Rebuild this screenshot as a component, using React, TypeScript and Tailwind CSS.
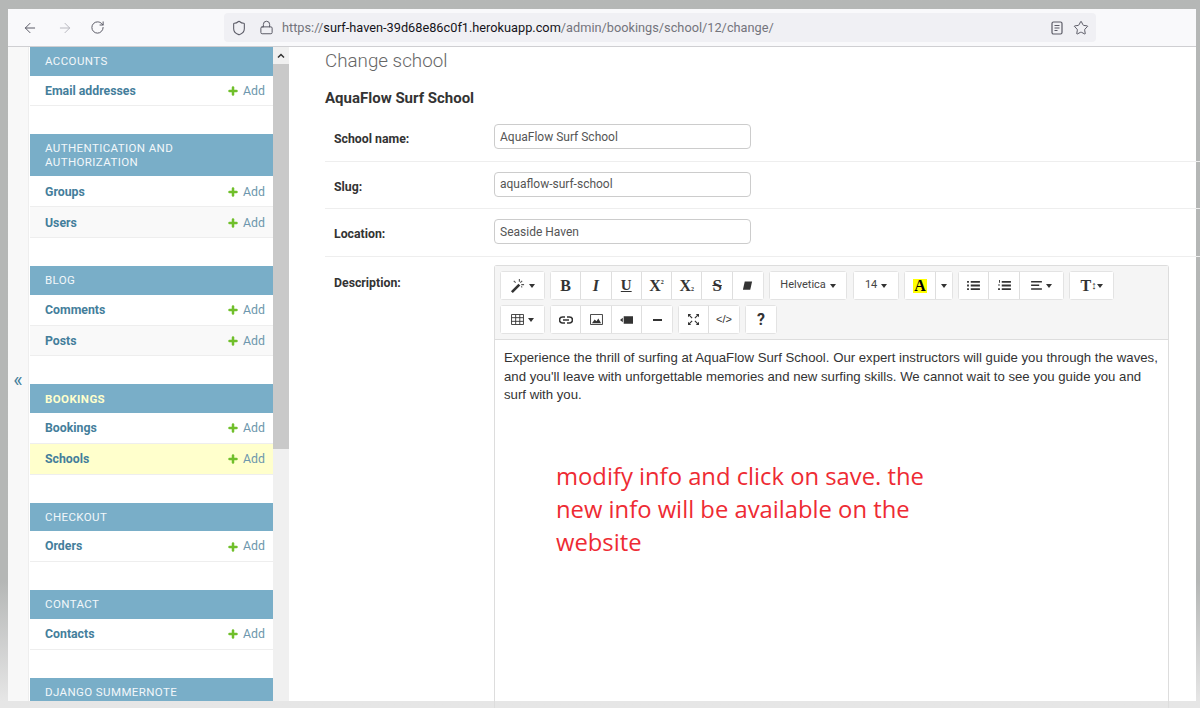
import { Lock, RotateCw, ArrowLeft, ArrowRight, Shield, Star, Plus } from "lucide-react";
import type { ReactNode } from "react";

const SECTIONS = [
  { title: "ACCOUNTS", rows: ["Email addresses"], first: true },
  { title: "AUTHENTICATION AND AUTHORIZATION", rows: ["Groups", "Users"] },
  { title: "BLOG", rows: ["Comments", "Posts"] },
  { title: "BOOKINGS", rows: ["Bookings", "Schools"], active: true },
  { title: "CHECKOUT", rows: ["Orders"] },
  { title: "CONTACT", rows: ["Contacts"] },
  { title: "DJANGO SUMMERNOTE", rows: [] },
];

function Caret() {
  return <span className="inline-block h-0 w-0 border-x-[3px] border-t-[4px] border-x-transparent border-t-[#333]" />;
}

function Btn({ children, className = "" }: { children: ReactNode; className?: string }) {
  return (
    <div className={`flex h-[27px] items-center justify-center gap-1 border-r border-[#dedede] bg-white text-[#333] last:border-r-0 ${className}`}>
      {children}
    </div>
  );
}

function Group({ children, className = "" }: { children: ReactNode; className?: string }) {
  return <div className={`flex rounded-[3px] border border-[#e3e3e3] bg-white ${className}`}>{children}</div>;
}

function Field({ label, value }: { label: string; value: string }) {
  return (
    <div className="flex h-[47.5px] border-b border-[#eeeeee] pl-[9px] pt-[10px]">
      <div className="w-[160px] pt-[6px] text-[12.3px] font-bold text-[#333]">{label}</div>
      <div className="flex h-[25px] w-[257px] items-center rounded-[4px] border border-[#cccccc] px-[5px] text-[12px] text-[#555]">
        {value}
      </div>
    </div>
  );
}

function Sidebar() {
  return (
    <div className="relative h-full w-[243px] overflow-hidden">
      {SECTIONS.map((s) => (
        <div key={s.title} className="mb-[28px]">
          <div
            className={`flex items-center bg-[#79aec8] pl-[15px] pr-[20px] text-[11.5px] leading-[14px] tracking-[0.4px] ${
              s.title.length > 20 && s.rows.length ? "h-[42px]" : "h-[28.5px]"
            } ${s.active ? "font-bold text-[#ffffcc]" : "text-[#f2f7fa]"}`}
          >
            {s.title}
          </div>
          {s.rows.map((r) => (
            <div
              key={r}
              className={`flex h-[30.9px] items-center justify-between border-b border-[#eeeeee] pl-[15px] pr-[8px] pt-[1px] text-[12.3px] ${
                r === "Schools" ? "bg-[#ffffcc]" : r === "Users" || r === "Posts" ? "bg-[#f9f9f9]" : "bg-white"
              }`}
            >
              <span className="font-bold text-[#447e9b]">{r}</span>
              <span className="flex items-center gap-[4px] text-[#6d97ad]">
                <Plus size={12} strokeWidth={5} className="text-[#70bf2b]" />
                Add
              </span>
            </div>
          ))}
        </div>
      ))}
    </div>
  );
}

function Toolbar() {
  return (
    <div className="border-b border-[#dddddd] bg-[#f5f5f5] p-[5px]">
      <div className="flex h-[29px] gap-[5px]">
        <Group>
          <Btn className="w-[43px]">
            <svg viewBox="0 0 16 16" className="h-[15px] w-[15px]">
              <path d="M1 14 9 6l2 2-8 8z" fill="#333" />
              <path d="M10 1v3M13 3l-2 2M15 7h-3M4 3l2 2M13 10l-1-1" stroke="#555" strokeWidth="1.2" />
            </svg>
            <Caret />
          </Btn>
        </Group>
        <Group>
          <Btn className="w-[30.3px] font-['Liberation_Serif',serif] text-[16px] font-bold">B</Btn>
          <Btn className="w-[30.3px] font-['Liberation_Serif',serif] text-[16px] font-bold italic">I</Btn>
          <Btn className="w-[30.3px] font-['Liberation_Serif',serif] text-[15px] font-bold underline">U</Btn>
          <Btn className="w-[30.3px] !gap-0 font-['Liberation_Serif',serif] text-[16px] font-bold">
            X<span className="mb-[6px] text-[6px]">2</span>
          </Btn>
          <Btn className="w-[30.3px] !gap-0 font-['Liberation_Serif',serif] text-[16px] font-bold">
            X<span className="mt-[7px] text-[6px]">2</span>
          </Btn>
          <Btn className="w-[30.3px] font-['Liberation_Serif',serif] text-[17px] font-bold line-through">S</Btn>
          <Btn className="w-[30.3px]">
            <svg viewBox="0 0 12 12" className="h-[11px] w-[11px]">
              <path d="M3 1.500h8L9 10.500H1z" fill="#333" />
            </svg>
          </Btn>
        </Group>
        <Group>
          <Btn className="w-[76px] text-[11px] text-[#444]">
            Helvetica <Caret />
          </Btn>
        </Group>
        <Group className="ml-[1px]">
          <Btn className="w-[44px] text-[11px] text-[#444]">
            14 <Caret />
          </Btn>
        </Group>
        <Group>
          <Btn className="w-[31px]">
            <span className="bg-[#ffff00] px-[1px] font-['Liberation_Serif',serif] text-[16px] font-bold leading-[14px] text-black">A</span>
          </Btn>
          <Btn className="w-[16px]">
            <Caret />
          </Btn>
        </Group>
        <Group>
          <Btn className="w-[30px]">
            <svg viewBox="0 0 14 12" className="h-[11px] w-[13px]" fill="#333">
              <path d="M0 1h2v2H0zM4 1h10v2H4zM0 5h2v2H0zM4 5h10v2H4zM0 9h2v2H0zM4 9h10v2H4z" />
            </svg>
          </Btn>
          <Btn className="w-[31px]">
            <svg viewBox="0 0 14 12" className="h-[11px] w-[13px]" fill="#333">
              <path d="M1 0h1v3H1zM4 1h10v2H4zM0 5h2v1H0zM4 5h10v2H4zM0 9h2v2H0zM4 9h10v2H4z" />
            </svg>
          </Btn>
          <Btn className="w-[43px]">
            <svg viewBox="0 0 12 10" className="h-[9px] w-[11px]" fill="#333">
              <path d="M0 0h12v1.600H0zM0 4h9v1.600H0zM0 8h12v1.600H0z" />
            </svg>
            <Caret />
          </Btn>
        </Group>
        <Group>
          <Btn className="w-[43px] !gap-0 font-['Liberation_Serif',serif] text-[16px] font-bold">
            T<span className="text-[11px] font-normal">↕</span>
            <Caret />
          </Btn>
        </Group>
      </div>
      <div className="mt-[5px] flex h-[29px] gap-[5px]">
        <Group>
          <Btn className="w-[43px]">
            <svg viewBox="0 0 14 12" className="h-[11px] w-[13px]" fill="none" stroke="#333">
              <path d="M.5.5h13v11H.5zM.5 4h13M.5 8h13M5 .5v11M9.500.5v11" />
            </svg>
            <Caret />
          </Btn>
        </Group>
        <Group>
          <Btn className="w-[30px]">
            <svg viewBox="0 0 14 8" className="h-[8px] w-[14px]" fill="none" stroke="#333" strokeWidth="1.6">
              <path d="M6 1H3.500a3 3 0 0 0 0 6H6M8 1h2.500a3 3 0 0 1 0 6H8M4 4h6" />
            </svg>
          </Btn>
          <Btn className="w-[31px]">
            <svg viewBox="0 0 14 12" className="h-[11px] w-[13px]">
              <path d="M.5.5h13v11H.5z" fill="none" stroke="#333" />
              <path d="M2 10l3-4 2 2 2-3 3 5z" fill="#333" />
            </svg>
          </Btn>
          <Btn className="w-[30px]">
            <svg viewBox="0 0 14 8" className="h-[8px] w-[13px]" fill="#333">
              <path d="M4 0h10v8H4zM0 4l3-2.500v5z" />
            </svg>
          </Btn>
          <Btn className="w-[30px]">
            <span className="h-[2px] w-[9px] bg-[#333]" />
          </Btn>
        </Group>
        <Group>
          <Btn className="w-[30px]">
            <svg viewBox="0 0 12 12" className="h-[11px] w-[11px]" fill="none" stroke="#333" strokeWidth="1.3">
              <path d="M1 1l3.500 3.500M11 1 7.500 4.500M1 11l3.500-3.500M11 11 7.500 7.500" />
              <path d="M0 0h3.500L0 3.500zM12 0v3.500L8.500 0zM0 12V8.500L3.500 12zM12 12H8.500L12 8.500z" fill="#333" stroke="none" />
            </svg>
          </Btn>
          <Btn className="w-[30px] font-['Liberation_Sans',sans-serif] text-[11px]">&lt;/&gt;</Btn>
        </Group>
        <Group>
          <Btn className="w-[30px] text-[16px] font-bold">?</Btn>
        </Group>
      </div>
    </div>
  );
}

export default function App() {
  return (
    <div className="flex h-[708px] w-[1200px] flex-col overflow-hidden bg-linear-to-b from-[#b5b7b6] from-[82%] to-[#e6e6e6] to-[99%] pb-[7px] pl-[8px] pr-[4px] pt-[9px] font-['Roboto','Liberation_Sans',sans-serif]">
      {/* browser chrome */}
      <div className="flex h-[38px] shrink-0 items-center border-b border-[#cfcfd2] bg-[#f9f9fb] pl-[14px] text-[#5b5b66]">
        <ArrowLeft size={16} strokeWidth={1.5} />
        <ArrowRight size={16} strokeWidth={1.5} className="ml-[19px] text-[#b9b9c0]" />
        <RotateCw size={15} strokeWidth={1.6} className="ml-[17px]" />
        <div className="ml-[119px] flex h-[29px] w-[872px] items-center rounded-[4px] bg-[#f0f0f4] pl-[7px]">
          <Shield size={16} strokeWidth={1.6} />
          <Lock size={15} strokeWidth={1.6} className="ml-[12px]" />
          <div className="ml-[8px] flex-1 text-[12.75px] text-[#74747c]">
            https://<span className="text-[#15141a]">surf-haven-39d68e86c0f1.herokuapp.com</span>/admin/bookings/school/12/change/
          </div>
          <svg viewBox="0 0 14 14" className="mr-[9px] h-[14px] w-[14px]" fill="none" stroke="#5b5b66" strokeWidth="1.2">
            <rect x="2" y="1" width="10" height="12" rx="1.500" />
            <path d="M4.500 4.500h5M4.500 7h5M4.500 9.500h3" />
          </svg>
          <Star size={16} strokeWidth={1.5} className="mr-[7px]" />
        </div>
      </div>

      <div className="flex min-h-0 flex-1 bg-white">
        {/* nav toggle */}
        <div className="flex w-[21px] shrink-0 items-center justify-center border-r border-[#eeeeee] bg-[#f8f8f8] text-[20px] text-[#447e9b]">
          <span className="mt-[12px]">«</span>
        </div>
        <div className="w-[1px] shrink-0" />
        <Sidebar />
        {/* sidebar scrollbar */}
        <div className="flex w-[16px] shrink-0 flex-col bg-[#f0f0f0]">
          <div className="flex h-[17px] items-center justify-center bg-[#f0f0f0]">
            <svg viewBox="0 0 8 5" className="h-[5px] w-[8px]" fill="none" stroke="#333" strokeWidth="1.500">
              <path d="M1 4.500 4 1.500l3 3" />
            </svg>
          </div>
          <div className="h-[385px] bg-[#c9c9c9]" />
        </div>

        {/* main */}
        <div className="min-w-0 flex-1 pl-[36px]">
          <h1 className="mt-[2px] text-[18.8px] font-light leading-[24px] text-[#666]">Change school</h1>
          <h2 className="mb-[6px] mt-[15px] text-[15px] font-bold leading-[20px] text-[#333]">AquaFlow Surf School</h2>
          <div className="mr-[-4px]">
            <Field label="School name:" value="AquaFlow Surf School" />
            <Field label="Slug:" value="aquaflow-surf-school" />
            <Field label="Location:" value="Seaside Haven" />
          </div>
          <div className="flex pl-[9px] pt-[8.5px]">
            <div className="w-[160px] pt-[9px] text-[12.3px] font-bold text-[#333]">Description:</div>
            <div className="w-[675px] rounded-t-[3px] border border-b-0 border-[#dddddd]">
              <Toolbar />
              <div className="h-[400px] px-[9px] py-[9px] font-['Liberation_Sans',sans-serif] text-[13.2px] leading-[18.7px] text-[#333]">
                <p>
                  Experience the thrill of surfing at AquaFlow Surf School. Our expert instructors will guide you through the waves, and you'll leave with unforgettable memories and new surfing skills. We cannot wait to see you guide you and surf with you.
                </p>
                <p className="ml-[52px] mt-[55px] w-[400px] font-['Open_Sans',sans-serif] text-[23.8px] leading-[33px] text-[#ee2b33]">
                  modify info and click on save. the new info will be available on the website
                </p>
              </div>
            </div>
          </div>
        </div>
      </div>
    </div>
  );
}
